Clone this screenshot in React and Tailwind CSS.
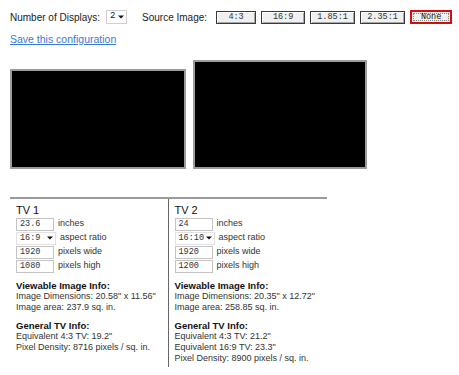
import React from "react";

const sourceButtons = [
  { label: "4:3", w: "w-[40px]" },
  { label: "16:9", w: "w-[44px]" },
  { label: "1.85:1", w: "w-[45px]" },
  { label: "2.35:1", w: "w-[45px]" },
];

const tvs = [
  {
    name: "TV 1",
    inches: "23.6",
    ratio: "16:9",
    width: "1920",
    height: "1080",
    dims: 'Image Dimensions: 20.58" x 11.56"',
    area: "Image area: 237.9 sq. in.",
    general: ['Equivalent 4:3 TV: 19.2"', "Pixel Density: 8716 pixels / sq. in."],
  },
  {
    name: "TV 2",
    inches: "24",
    ratio: "16:10",
    width: "1920",
    height: "1200",
    dims: 'Image Dimensions: 20.35" x 12.72"',
    area: "Image area: 258.85 sq. in.",
    general: [
      'Equivalent 4:3 TV: 21.2"',
      'Equivalent 16:9 TV: 23.3"',
      "Pixel Density: 8900 pixels / sq. in.",
    ],
  },
];

const Arrow = () => (
  <svg width="6" height="4" viewBox="0 0 6 4" className="shrink-0">
    <path d="M0 0.5 L6 0.5 L3 3.5 Z" fill="#111" />
  </svg>
);

const TextBox = ({ value }) => (
  <div className="w-[38px] h-[13px] border border-[#c4c4c4] bg-white flex items-center pl-[3px] font-['Liberation_Mono'] text-[8.5px] leading-none text-[#333]">
    {value}
  </div>
);

const Row = ({ children, label }) => (
  <div className="h-[14px] flex items-center">
    {children}
    <span className="ml-[4px] text-[9px] text-[#333]">{label}</span>
  </div>
);

const TvColumn = ({ tv, first }) => (
  <div
    className={`pl-[6px] pt-[4px] pb-[3px] ${first ? "border-r border-[#666]" : ""}`}
  >
    <div className="text-[11px] leading-[14px] text-[#111]">{tv.name}</div>
    <Row label="inches">
      <TextBox value={tv.inches} />
    </Row>
    <Row label="aspect ratio">
      <div className="w-[40px] h-[13px] border border-[#e2e2e2] bg-white flex items-center justify-between pl-[3px] pr-[2px] font-['Liberation_Mono'] text-[8.5px] leading-none text-[#333]">
        <span>{tv.ratio}</span>
        <Arrow />
      </div>
    </Row>
    <Row label="pixels wide">
      <TextBox value={tv.width} />
    </Row>
    <Row label="pixels high">
      <TextBox value={tv.height} />
    </Row>

    <div className="mt-[7px] text-[9px] leading-[11px] text-[#333]">
      <div className="font-bold text-[9.5px] text-[#111]">Viewable Image Info:</div>
      <div>{tv.dims}</div>
      <div>{tv.area}</div>
      <div className="mt-[7px] font-bold text-[9.5px] text-[#111]">General TV Info:</div>
      {tv.general.map((line) => (
        <div key={line}>{line}</div>
      ))}
    </div>
  </div>
);

export default function App() {
  return (
    <div className="w-[459px] h-[375px] bg-white pl-[10px] pt-[10px] font-['Liberation_Sans',Arial,sans-serif] text-[#222] overflow-hidden">
      {/* Top controls */}
      <div className="h-[14px] flex items-center text-[10px]">
        <span>Number of Displays:</span>
        <div className="ml-[6px] w-[21px] h-[14px] border border-[#d0d0d0] flex items-center justify-between pl-[3px] pr-[2px] font-['Liberation_Mono'] text-[9px]">
          <span>2</span>
          <Arrow />
        </div>
        <span className="ml-[15px]">Source Image:</span>
        <div className="ml-[9px] flex items-center gap-[5px]">
          {sourceButtons.map((b) => (
            <button
              key={b.label}
              className={`${b.w} h-[13px] border border-[#3a3a3a] bg-[#f0f0f0] shadow-[inset_1px_1px_0_#fff,inset_-1px_-1px_0_#a8a8a8] flex items-center justify-center font-['Liberation_Mono'] text-[8.5px] leading-none text-[#333]`}
            >
              {b.label}
            </button>
          ))}
          <button className="w-[42px] h-[14px] border-2 border-[#d01010] bg-[#f0f0f0] flex items-center justify-center p-[1px]">
            <span className="w-full h-full border border-dotted border-[#888] flex items-center justify-center font-['Liberation_Mono'] text-[8.5px] leading-none text-[#111]">
              None
            </span>
          </button>
        </div>
      </div>

      <a
        href="#"
        className="mt-[9px] block w-fit text-[10.5px] leading-[12px] text-[#3a78d6] underline"
      >
        Save this configuration
      </a>

      {/* Screens */}
      <div className="mt-[15px] flex items-end gap-[7px]">
        <div className="w-[176px] h-[100px] bg-black border-2 border-[#9c9c9c]" />
        <div className="w-[174px] h-[109px] bg-black border-2 border-[#9c9c9c]" />
      </div>

      {/* TV details */}
      <div className="mt-[28px] w-[317px] border-t-2 border-[#9a9a9a] grid grid-cols-2">
        {tvs.map((tv, i) => (
          <TvColumn key={tv.name} tv={tv} first={i === 0} />
        ))}
      </div>
    </div>
  );
}
